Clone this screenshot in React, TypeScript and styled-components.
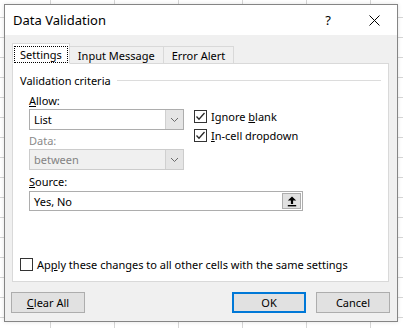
import React from 'react'
import styled, { createGlobalStyle } from 'styled-components'

const GlobalStyle = createGlobalStyle`
    html, body {
        margin: 0;
        padding: 0;
        background: #ffffff;
    }
    body {
        font-family: "Noto Sans", "Open Sans", sans-serif;
        font-size: 11px;
        color: #000000;
    }
`

const Chevron = () => (
    <svg width="9" height="6" viewBox="0 0 9 6">
        <polyline points="1,1 4.5,4.5 8,1" fill="none" stroke="#6a6a6a" strokeWidth="1" />
    </svg>
)

const Check = () => (
    <svg width="11" height="11" viewBox="0 0 11 11">
        <polyline points="1.5,5.5 4,8.2 9.5,2" fill="none" stroke="#262626" strokeWidth="1.3" />
    </svg>
)

const CollapseArrow = () => (
    <svg width="10" height="11" viewBox="0 0 10 11">
        <path d="M5 0.5 L9.2 4.6 L6.1 4.6 L6.1 8 L3.9 8 L3.9 4.6 L0.8 4.6 Z" fill="#000" />
        <rect x="0.8" y="9" width="8.4" height="1.4" fill="#000" />
    </svg>
)

const CloseIcon = () => (
    <svg width="11" height="11" viewBox="0 0 11 11">
        <line x1="0.5" y1="0.5" x2="10.5" y2="10.5" stroke="#000" strokeWidth="1" />
        <line x1="10.5" y1="0.5" x2="0.5" y2="10.5" stroke="#000" strokeWidth="1" />
    </svg>
)

const CheckBox = ({ checked }: { checked?: boolean }) => (
    <Box>{checked && <Check />}</Box>
)

const App = () => {
    return (
        <>
            <GlobalStyle />
            <Sheet>
                <Dialog>
                    <TitleBar>
                        <Title>Data Validation</Title>
                        <TitleButton>?</TitleButton>
                        <TitleButton>
                            <CloseIcon />
                        </TitleButton>
                    </TitleBar>
                    <Body>
                        <Tabs>
                            <Tab active>
                                <FocusRing>Settings</FocusRing>
                            </Tab>
                            <Tab>Input Message</Tab>
                            <Tab>Error Alert</Tab>
                        </Tabs>
                        <Panel>
                            <GroupHeader>
                                <span>Validation criteria</span>
                                <GroupLine />
                            </GroupHeader>
                            <Fields>
                                <AllowRow>
                                    <Column>
                                        <Label>
                                            <u>A</u>llow:
                                        </Label>
                                        <Combo>
                                            <ComboText>List</ComboText>
                                            <DropButton>
                                                <Chevron />
                                            </DropButton>
                                        </Combo>
                                        <Label disabled>Data:</Label>
                                        <Combo disabled>
                                            <ComboText>between</ComboText>
                                            <DropButton>
                                                <Chevron />
                                            </DropButton>
                                        </Combo>
                                    </Column>
                                    <Options>
                                        <CheckRow>
                                            <CheckBox checked />
                                            <span>
                                                Ignore <u>b</u>lank
                                            </span>
                                        </CheckRow>
                                        <CheckRow>
                                            <CheckBox checked />
                                            <span>
                                                <u>I</u>n-cell dropdown
                                            </span>
                                        </CheckRow>
                                    </Options>
                                </AllowRow>
                                <Label>
                                    <u>S</u>ource:
                                </Label>
                                <SourceInput>
                                    <ComboText>Yes, No</ComboText>
                                    <CollapseButton>
                                        <CollapseArrow />
                                    </CollapseButton>
                                </SourceInput>
                            </Fields>
                            <ApplyRow>
                                <CheckBox />
                                <span>
                                    Ap<u>p</u>ly these changes to all other cells with the same settings
                                </span>
                            </ApplyRow>
                        </Panel>
                    </Body>
                    <Footer>
                        <Button>
                            <u>C</u>lear All
                        </Button>
                        <ButtonGroup>
                            <Button primary>OK</Button>
                            <Button>Cancel</Button>
                        </ButtonGroup>
                    </Footer>
                </Dialog>
                <Highlight top={93} height={56} />
                <Highlight top={169} height={56} />
            </Sheet>
        </>
    )
}

const Sheet = styled.div`
    position: relative;
    width: 403px;
    height: 328px;
    overflow: hidden;
    box-sizing: border-box;
    padding: 4px 0 0 4px;
    background-color: #ffffff;
    background-image:
        linear-gradient(to right, #d6d6d6 1px, transparent 1px),
        linear-gradient(to bottom, #d6d6d6 1px, transparent 1px);
    background-size: 64px 100%, 100% 20px;
    background-position: 50px 0, 0 17px;
`

const Dialog = styled.div`
    width: 394px;
    height: 318px;
    box-sizing: border-box;
    border: 1px solid #858585;
    background: #f0f0f0;
    display: flex;
    flex-direction: column;
    box-shadow: 0 0 4px rgba(0, 0, 0, 0.12);
`

const TitleBar = styled.div`
    height: 30px;
    background: #ffffff;
    display: flex;
    align-items: center;
    padding-left: 8px;
`

const Title = styled.div`
    flex: 1;
    font-size: 13px;
    padding-bottom: 1px;
`

const TitleButton = styled.div`
    width: 46px;
    height: 30px;
    display: flex;
    align-items: center;
    justify-content: center;
    font-size: 13px;
`

const Body = styled.div`
    padding: 8px 8px 0 7px;
`

const Tabs = styled.div`
    display: flex;
    align-items: flex-end;
    height: 20px;
    padding-left: 1px;
`

const Tab = styled.div<{ active?: boolean }>`
    position: relative;
    z-index: ${p => (p.active ? 2 : 1)};
    box-sizing: border-box;
    height: ${p => (p.active ? '21px' : '18px')};
    margin-bottom: -1px;
    margin-left: ${p => (p.active ? '-1px' : '0')};
    padding: ${p => (p.active ? '1px 2px 0 2px' : '0 8px')};
    display: flex;
    align-items: center;
    border: 1px solid #d9d9d9;
    border-bottom: ${p => (p.active ? '1px solid #ffffff' : '1px solid #d9d9d9')};
    background: ${p => (p.active ? '#ffffff' : '#f0f0f0')};
    & + & {
        border-left: none;
    }
`

const FocusRing = styled.span`
    display: flex;
    align-items: center;
    height: 15px;
    padding: 0 5px;
    outline: 1px dotted #000000;
`

const Panel = styled.div`
    position: relative;
    z-index: 1;
    height: 219px;
    box-sizing: border-box;
    border: 1px solid #d9d9d9;
    background: #ffffff;
    display: flex;
    flex-direction: column;
    padding: 9px 7px 0 7px;
`

const GroupHeader = styled.div`
    display: flex;
    align-items: center;
    height: 15px;
`

const GroupLine = styled.div`
    flex: 1;
    height: 1px;
    background: #dcdcdc;
    margin-left: 6px;
`

const Fields = styled.div`
    padding: 6px 0 0 9px;
    display: flex;
    flex-direction: column;
`

const AllowRow = styled.div`
    display: flex;
    gap: 10px;
`

const Column = styled.div`
    display: flex;
    flex-direction: column;
    width: 155px;
`

const Label = styled.div<{ disabled?: boolean }>`
    height: 14px;
    line-height: 14px;
    margin-bottom: 1px;
    color: ${p => (p.disabled ? '#8a8a8a' : '#000000')};
`

const Combo = styled.div<{ disabled?: boolean }>`
    display: flex;
    height: 21px;
    box-sizing: border-box;
    border: 1px solid ${p => (p.disabled ? '#cccccc' : '#adadad')};
    background: ${p => (p.disabled ? '#f0f0f0' : '#ffffff')};
    color: ${p => (p.disabled ? '#838383' : '#000000')};
    margin-bottom: ${p => (p.disabled ? '5px' : '4px')};
`

const ComboText = styled.div`
    flex: 1;
    display: flex;
    align-items: center;
    padding-left: 4px;
`

const DropButton = styled.div`
    width: 17px;
    display: flex;
    align-items: center;
    justify-content: center;
    background: #e5e5e5;
    border-left: 1px solid #d0d0d0;
`

const Options = styled.div`
    display: flex;
    flex-direction: column;
    padding-top: 15px;
    gap: 4px;
`

const CheckRow = styled.div`
    display: flex;
    align-items: center;
    gap: 4px;
    height: 15px;
`

const Box = styled.div`
    width: 13px;
    height: 13px;
    box-sizing: border-box;
    border: 1px solid #333333;
    background: #ffffff;
    display: flex;
    align-items: center;
    justify-content: center;
    flex-shrink: 0;
`

const SourceInput = styled.div`
    display: flex;
    width: 274px;
    height: 20px;
    box-sizing: border-box;
    border: 1px solid #adadad;
    background: #ffffff;
    margin-top: 1px;
`

const CollapseButton = styled.div`
    width: 19px;
    margin: 1px;
    box-sizing: border-box;
    border: 1px solid #adadad;
    background: #e1e1e1;
    display: flex;
    align-items: center;
    justify-content: center;
`

const ApplyRow = styled.div`
    margin-top: auto;
    margin-bottom: 9px;
    display: flex;
    align-items: center;
    gap: 4px;
    height: 15px;
`

const Footer = styled.div`
    display: flex;
    padding: 10px 7px 0 6px;
`

const ButtonGroup = styled.div`
    margin-left: auto;
    display: flex;
    gap: 10px;
`

const Button = styled.div<{ primary?: boolean }>`
    width: 74px;
    height: 21px;
    box-sizing: border-box;
    display: flex;
    align-items: center;
    justify-content: center;
    background: #e1e1e1;
    border: ${p => (p.primary ? '2px solid #0078d7' : '1px solid #adadad')};
`

const Highlight = styled.div<{ top: number; height: number }>`
    position: absolute;
    left: 16px;
    top: ${p => p.top}px;
    width: 295px;
    height: ${p => p.height}px;
    box-sizing: border-box;
    border: 3px solid #e00000;
    pointer-events: none;
`

export default App
